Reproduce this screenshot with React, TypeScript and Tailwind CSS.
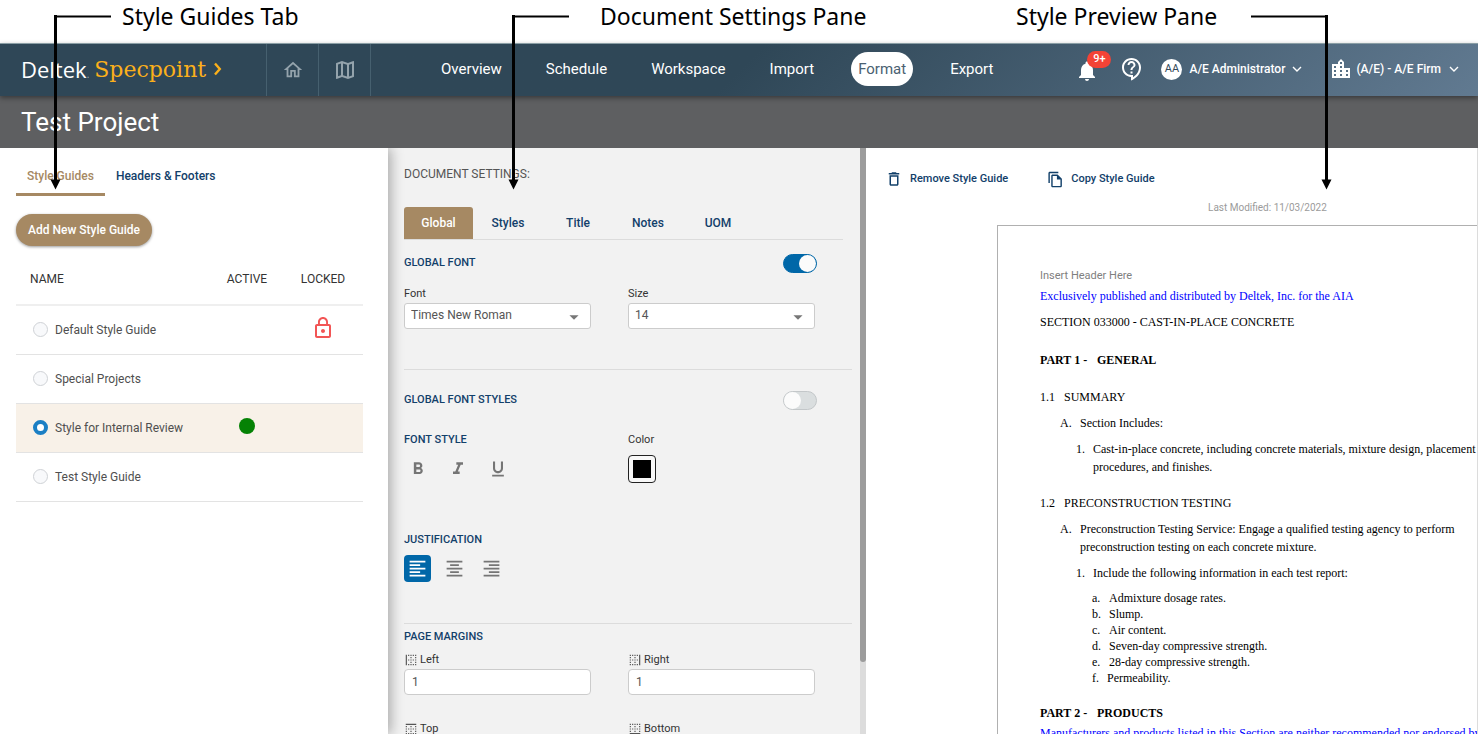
import { useState } from "react";
import type { ReactNode } from "react";
import type { IconType } from "react-icons";
import {
  MdArrowDropDown,
  MdBorderBottom,
  MdBorderLeft,
  MdBorderRight,
  MdBorderTop,
  MdFormatAlignCenter,
  MdFormatAlignLeft,
  MdFormatAlignRight,
  MdFormatBold,
  MdFormatItalic,
  MdFormatUnderlined,
  MdLocationCity,
  MdLockOutline,
  MdNotifications,
  MdOutlineContactSupport,
  MdOutlineDelete,
  MdOutlineFileCopy,
  MdOutlineHome,
  MdOutlineMap,
} from "react-icons/md";

const navItems = ["Overview", "Schedule", "Workspace", "Import", "Format", "Export"];

const guides = [
  { name: "Default Style Guide", active: false, locked: true },
  { name: "Special Projects", active: false, locked: false },
  { name: "Style for Internal Review", active: true, locked: false },
  { name: "Test Style Guide", active: false, locked: false },
];

const settingTabs = ["Global", "Styles", "Title", "Notes", "UOM"];

function Chevron() {
  return (
    <svg viewBox="0 0 10 6" className="h-[6px] w-[10px]" fill="none" stroke="currentColor" strokeWidth="1.4" aria-hidden="true">
      <path d="M1 1l4 4 4-4" />
    </svg>
  );
}

function CalloutBar() {
  return (
    <div className="grid h-[43px] shrink-0 grid-cols-[478px_416px_1fr] bg-white font-['Noto_Sans',sans-serif] text-[23px] leading-8 text-black">
      <p className="pl-[122px]">Style Guides Tab</p>
      <p className="pl-[122px]">Document Settings Pane</p>
      <p className="pl-[122px]">Style Preview Pane</p>
    </div>
  );
}

function CalloutArrow({ className, flip = false }: { className: string; flip?: boolean }) {
  return (
    <svg viewBox="0 0 84 176" className={`pointer-events-none absolute top-[14px] z-30 h-[176px] w-[84px] ${className}`} aria-hidden="true">
      <path d={flip ? "M76.500 2.500H1" : "M6.500 2.500H62"} stroke="#000" strokeWidth="2" fill="none" />
      <path d={flip ? "M76.500 1V167" : "M6.500 1V167"} stroke="#000" strokeWidth="3" fill="none" />
      <path d={flip ? "M71.500 165.500h10l-5 10z" : "M1.500 165.500h10l-5 10z"} />
    </svg>
  );
}

function NavBar() {
  return (
    <header className="relative z-20 flex h-[53px] shrink-0 items-stretch border-t border-[#8a9ea5] bg-linear-135 from-[#2f4757] from-50% to-[#617a91] text-white shadow-[0_2px_5px_rgba(0,0,0,0.4)]">
      <a href="#home" className="flex w-[267px] shrink-0 items-center gap-[5px] border-r border-[#46606f] pb-0.5 pl-[21px]">
        <span className="font-['Open_Sans',sans-serif] text-[22px] font-medium">
          Deltek<span className="text-[10px] text-[#9badb8]">.</span>
        </span>
        <span className="flex items-center gap-2 font-['DejaVu_Serif',serif] text-[22px] text-[#fbb01b]">
          Specpoint
          <svg viewBox="0 0 8 14" className="h-[14px] w-[8px]" fill="none" stroke="currentColor" strokeWidth="2.4" aria-hidden="true">
            <path d="M1 1.500l4.800 5.500L1 12.500" />
          </svg>
        </span>
      </a>
      <button aria-label="Home" className="flex w-[52px] shrink-0 items-center justify-center border-r border-[#46606f] text-[#94a3ac]">
        <MdOutlineHome size={22} />
      </button>
      <button aria-label="Library" className="flex w-[52px] shrink-0 items-center justify-center border-r border-[#46606f] text-[#94a3ac]">
        <MdOutlineMap size={24} />
      </button>
      <nav className="ml-[63px] flex items-center gap-[30px] pb-0.5 text-[15px]">
        {navItems.map((item) => (
          <a
            key={item}
            href={`#${item.toLowerCase()}`}
            className={
              item === "Format"
                ? "flex h-[34px] items-center rounded-full bg-white px-[7px] text-[#4a6172]"
                : "flex h-[34px] items-center px-[7px]"
            }
          >
            {item}
          </a>
        ))}
      </nav>
      <div className="ml-auto flex items-center pb-0.5 pr-[19px] text-[12px] font-medium">
        <button aria-label="Notifications" className="relative flex w-[22px] justify-center pt-1">
          <MdNotifications size={24} className="shrink-0" />
          <span className="absolute -top-[4px] left-[11px] flex h-[17px] w-6 items-center justify-center rounded-full bg-[#f44336] text-[11px]">
            9+
          </span>
        </button>
        <button aria-label="Help" className="ml-[22px]">
          <MdOutlineContactSupport size={24} />
        </button>
        <button className="ml-[17px] flex items-center gap-[7px]">
          <span className="flex size-[21px] items-center justify-center rounded-full bg-white text-[11px] font-normal text-[#33495a]">AA</span>
          A/E Administrator
          <Chevron />
        </button>
        <button className="ml-[27px] flex items-center gap-[3px]">
          <MdLocationCity size={24} />
          (A/E) - A/E Firm
          <span className="ml-[5px]">
            <Chevron />
          </span>
        </button>
      </div>
    </header>
  );
}

function GuideList() {
  const [selected, setSelected] = useState("Style for Internal Review");
  return (
    <aside className="relative z-10 w-[388px] shrink-0 bg-white pl-4 pr-[25px] pt-[10px] shadow-[3px_0_12px_rgba(0,0,0,0.3)]">
      <div role="tablist" className="flex text-[12px] font-medium">
        <button role="tab" aria-selected="true" className="h-[38px] border-b-3 border-[#a68963] px-[11px] text-[#a68963]">
          Style Guides
        </button>
        <button role="tab" aria-selected="false" className="h-[38px] border-b-3 border-transparent px-[11px] text-[#12406a]">
          Headers &amp; Footers
        </button>
      </div>
      <button className="mt-[18px] flex h-8 items-center rounded-full bg-[#a68963] px-3 text-[12px] font-medium text-white shadow-[0_1px_3px_rgba(0,0,0,0.4)]">
        Add New Style Guide
      </button>
      <table className="mt-[6px] w-full table-fixed text-[12px] text-[#4f4f4f]">
        <thead>
          <tr className="h-[53px] border-b-2 border-[#efefef] text-[#333]">
            <th className="pl-[14px] pt-0.5 text-left font-normal">NAME</th>
            <th className="w-[72px] pt-0.5 font-normal">ACTIVE</th>
            <th className="w-[80px] pt-0.5 font-normal">LOCKED</th>
          </tr>
        </thead>
        <tbody>
          {guides.map((guide) => (
            <tr
              key={guide.name}
              className={
                selected === guide.name
                  ? "h-[49px] border-b border-[#e3e3e3] bg-[#f8f1e8]"
                  : "h-[49px] border-b border-[#e3e3e3]"
              }
            >
              <td className="pl-[17px]">
                <label className="flex items-center gap-[7px]">
                  <input
                    type="radio"
                    name="guide"
                    checked={selected === guide.name}
                    onChange={() => setSelected(guide.name)}
                    className="size-[15px] shrink-0 appearance-none rounded-full border border-[#cfd2d6] bg-[#f8f9fb] checked:border-4 checked:border-[#1b7fc4] checked:bg-white"
                  />
                  {guide.name}
                </label>
              </td>
              <td>
                {guide.active && <span className="mx-auto mb-1 block size-4 rounded-full bg-[#058205]" aria-label="Active" />}
              </td>
              <td>{guide.locked && <MdLockOutline size={24} className="mx-auto mb-1 text-[#f25555]" aria-label="Locked" />}</td>
            </tr>
          ))}
        </tbody>
      </table>
    </aside>
  );
}

function Heading({ children }: { children: ReactNode }) {
  return <h3 className="text-[11px] font-medium leading-[18px] text-[#12406a]">{children}</h3>;
}

function Toggle({ label, initial }: { label: string; initial: boolean }) {
  const [on, setOn] = useState(initial);
  return (
    <button
      role="switch"
      aria-checked={on}
      aria-label={label}
      onClick={() => setOn(!on)}
      className={
        on
          ? "flex h-[19px] w-[34px] items-center justify-end rounded-full border border-[#0067a8] bg-[#0067a8]"
          : "flex h-[19px] w-[34px] items-center justify-start rounded-full border border-[#c3c7c9] bg-[#dadedf]"
      }
    >
      <span className="size-[17px] rounded-full bg-[#fbfbfb]" />
    </button>
  );
}

function SelectField({ label, options }: { label: string; options: string[] }) {
  return (
    <label className="block text-[11px] leading-[18px] text-[#333]">
      {label}
      <span className="relative block">
        <select className="h-[26px] w-full appearance-none rounded-[3px] border border-[#ccc] bg-white pb-0.5 pl-[6px] text-[12px] text-[#555]">
          {options.map((option) => (
            <option key={option}>{option}</option>
          ))}
        </select>
        <MdArrowDropDown size={22} className="pointer-events-none absolute right-[6px] top-[3px] text-[#777]" />
      </span>
    </label>
  );
}

function MarginField({ label, icon: Icon }: { label: string; icon: IconType }) {
  return (
    <label className="block text-[11px] leading-[18px] text-[#333]">
      <span className="flex items-center gap-[2px]">
        <Icon size={14} className="text-[#555]" />
        {label}
      </span>
      <input
        type="text"
        defaultValue="1"
        className="h-[26px] w-full rounded-[4px] border border-[#ccc] bg-white px-[7px] text-[12px] text-[#555]"
      />
    </label>
  );
}

function DocumentSettings() {
  return (
    <section className="flex w-[478px] shrink-0 bg-[#f2f2f2]">
      <div className="min-w-0 flex-1 overflow-hidden pl-4 pr-[8px] pt-4">
        <h2 className="text-[12px] leading-5 text-[#555]">DOCUMENT SETTINGS:</h2>
        <div role="tablist" className="mr-[9px] mt-[23px] flex border-b border-[#dcdcdc] text-[12px] font-medium text-[#12406a]">
          {settingTabs.map((tab) => (
            <button
              key={tab}
              role="tab"
              aria-selected={tab === "Global"}
              className={tab === "Global" ? "h-8 w-[69px] rounded-t-[3px] bg-[#a68963] text-white" : "h-8 w-[70px]"}
            >
              {tab}
            </button>
          ))}
        </div>

        <div className="mr-[35px] mt-[13px] flex h-5 items-center justify-between">
          <Heading>GLOBAL FONT</Heading>
          <Toggle label="Global font" initial={true} />
        </div>
        <div className="mr-[37px] mt-3 grid grid-cols-2 gap-[37px]">
          <SelectField label="Font" options={["Times New Roman", "Arial", "Courier New"]} />
          <SelectField label="Size" options={["14", "12", "10"]} />
        </div>

        <hr className="mt-10 border-[#dcdcdc]" />

        <div className="mr-[35px] mt-5 flex h-5 items-center justify-between">
          <Heading>GLOBAL FONT STYLES</Heading>
          <Toggle label="Global font styles" initial={false} />
        </div>
        <div className="mr-[37px] mt-[21px] grid grid-cols-2 gap-[37px]">
          <div>
            <Heading>FONT STYLE</Heading>
            <div className="mt-[6px] flex gap-3 text-[#757575]">
              <button aria-label="Bold" className="flex size-7 items-center justify-center">
                <MdFormatBold size={20} />
              </button>
              <button aria-label="Italic" className="flex size-7 items-center justify-center">
                <MdFormatItalic size={20} />
              </button>
              <button aria-label="Underline" className="flex size-7 items-center justify-center">
                <MdFormatUnderlined size={20} />
              </button>
            </div>
          </div>
          <div className="text-[11px] leading-[18px] text-[#333]">
            Color
            <button aria-label="Font color" className="mt-[6px] flex size-7 items-center justify-center rounded-[4px] border border-[#222] bg-[#f8f8f8]">
              <span className="size-[18px] bg-black" />
            </button>
          </div>
        </div>
        <div className="mt-12">
          <Heading>JUSTIFICATION</Heading>
          <div className="mt-[6px] flex gap-[10px] text-[#757575]">
            <button aria-label="Align left" className="flex size-[27px] items-center justify-center rounded-[4px] bg-[#0067a8] text-white">
              <MdFormatAlignLeft size={21} />
            </button>
            <button aria-label="Align center" className="flex size-[27px] items-center justify-center">
              <MdFormatAlignCenter size={21} />
            </button>
            <button aria-label="Align right" className="flex size-[27px] items-center justify-center">
              <MdFormatAlignRight size={21} />
            </button>
          </div>
        </div>

        <hr className="mt-[41px] border-[#dcdcdc]" />

        <div className="mr-[37px] mt-1">
          <Heading>PAGE MARGINS</Heading>
          <div className="mt-[5px] grid grid-cols-2 gap-x-[37px] gap-y-[25px]">
            <MarginField label="Left" icon={MdBorderLeft} />
            <MarginField label="Right" icon={MdBorderRight} />
            <MarginField label="Top" icon={MdBorderTop} />
            <MarginField label="Bottom" icon={MdBorderBottom} />
          </div>
        </div>
      </div>
      <div className="w-[6px] shrink-0 bg-[#dcdcdc]">
        <div className="h-[514px] rounded-b-full bg-[#9c9c9c]" />
      </div>
    </section>
  );
}

function Clause({ mark, className, children }: { mark: string; className: string; children: ReactNode }) {
  return (
    <div className={`grid ${className}`}>
      <span>{mark}</span>
      <span>{children}</span>
    </div>
  );
}

function StylePreview() {
  return (
    <section className="min-w-0 flex-1 overflow-hidden border-r border-[#dcdcdc] bg-white">
      <div className="flex items-center gap-[39px] pl-[19px] pt-[21px] text-[11px] font-medium text-[#12406a]">
        <button className="flex h-5 items-center gap-[7px]">
          <MdOutlineDelete size={18} />
          Remove Style Guide
        </button>
        <button className="flex h-5 items-center gap-[7px]">
          <MdOutlineFileCopy size={17} />
          Copy Style Guide
        </button>
      </div>
      <p className="mt-[11px] pl-[342px] text-[10px] leading-4 text-[#9b9b9b]">Last Modified: 11/03/2022</p>
      <article className="ml-[131px] mt-[9px] w-[545px] border border-[#b0b0b0] px-[42px] pt-[41px] font-['Liberation_Serif',serif] text-[12px] leading-[18px] text-black">
        <p className="font-['Roboto',sans-serif] text-[11px] text-[#808080]">Insert Header Here</p>
        <p className="mt-[2px] text-[#0000ff]">Exclusively published and distributed by Deltek, Inc. for the AIA</p>
        <p className="mt-2">SECTION 033000 - CAST-IN-PLACE CONCRETE</p>
        <Clause mark="PART 1 -" className="mt-5 grid-cols-[57px_1fr] font-bold">GENERAL</Clause>
        <Clause mark="1.1" className="mt-[19px] grid-cols-[24px_1fr]">SUMMARY</Clause>
        <Clause mark="A." className="ml-5 mt-2 grid-cols-[20px_1fr]">Section Includes:</Clause>
        <Clause mark="1." className="ml-9 mt-2 grid-cols-[17px_1fr]">
          Cast-in-place concrete, including concrete materials, mixture design, placement procedures, and finishes.
        </Clause>
        <Clause mark="1.2" className="mt-[18px] grid-cols-[24px_1fr]">PRECONSTRUCTION TESTING</Clause>
        <Clause mark="A." className="ml-5 mt-2 grid-cols-[20px_1fr]">
          Preconstruction Testing Service: Engage a qualified testing agency to perform preconstruction testing on each
          concrete mixture.
        </Clause>
        <Clause mark="1." className="ml-9 mt-2 grid-cols-[17px_1fr]">Include the following information in each test report:</Clause>
        <div className="ml-[52px] mt-2 leading-4">
          <Clause mark="a." className="grid-cols-[17px_1fr]">Admixture dosage rates.</Clause>
          <Clause mark="b." className="grid-cols-[17px_1fr]">Slump.</Clause>
          <Clause mark="c." className="grid-cols-[17px_1fr]">Air content.</Clause>
          <Clause mark="d." className="grid-cols-[17px_1fr]">Seven-day compressive strength.</Clause>
          <Clause mark="e." className="grid-cols-[17px_1fr]">28-day compressive strength.</Clause>
          <Clause mark="f." className="grid-cols-[15px_1fr]">Permeability.</Clause>
        </div>
        <Clause mark="PART 2 -" className="mt-[18px] grid-cols-[57px_1fr] font-bold">PRODUCTS</Clause>
        <p className="mt-[2px] text-[#0000ff]">
          Manufacturers and products listed in this Section are neither recommended nor endorsed by the AIA or Deltek.
        </p>
      </article>
    </section>
  );
}

export default function App() {
  return (
    <div className="relative flex h-screen flex-col overflow-hidden bg-white font-['Roboto',sans-serif]">
      <CalloutBar />
      <NavBar />
      <div className="relative z-[15] flex h-[52px] shrink-0 items-center bg-[#5e5f61] pl-[21px]">
        <h1 className="text-[26px] text-white">Test Project</h1>
      </div>
      <main className="flex min-h-0 flex-1">
        <GuideList />
        <DocumentSettings />
        <StylePreview />
      </main>
      <CalloutArrow className="left-[49px]" />
      <CalloutArrow className="left-[507px]" />
      <CalloutArrow className="left-[1250px]" flip />
    </div>
  );
}
